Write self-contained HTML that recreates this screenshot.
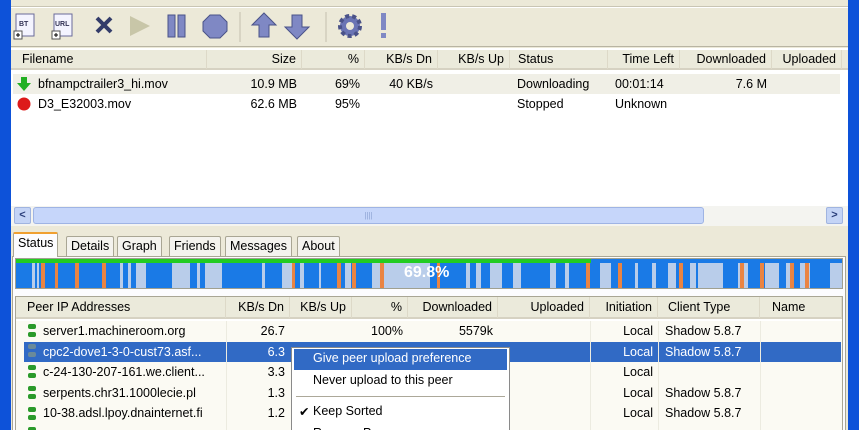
<!DOCTYPE html>
<html style="overflow:hidden;height:430px"><head><meta charset="utf-8"><style>
*{margin:0;padding:0;box-sizing:border-box}
body{width:859px;height:430px;overflow:hidden;background:#ece9d8;font-family:"Liberation Sans",Tahoma,sans-serif;font-size:12px;color:#000;position:relative}
.a{position:absolute;white-space:nowrap}
.hdr{position:absolute;height:20px;background:#ebeadb;border-bottom:2px solid #d6d2c2}
.hc{position:absolute;top:0;height:19px;line-height:19px;border-right:1px solid #ddd9c8;padding:0 5px;font-size:12.5px}
.r{text-align:right}
.cell{position:absolute;height:20px;line-height:20px;padding:0 5px;font-size:12.5px}
.tab{position:absolute;top:236px;height:20px;line-height:18px;border:1px solid #a9a694;border-bottom:none;background:#f4f3ee;padding:0 4px;font-size:12.5px;border-radius:2px 2px 0 0}
</style></head><body>
<div class="a" style="left:0;top:0;width:11px;height:430px;background:#0d52d9"></div>
<div class="a" style="left:848px;top:0;width:11px;height:430px;background:#0d52d9"></div>
<div class="a" style="left:11px;top:6px;width:837px;height:1px;background:#c9c5b4"></div>
<div class="a" style="left:11px;top:7px;width:837px;height:1px;background:#fff"></div>
<svg class="a" style="left:11px;top:8px" width="400" height="38">
<g><rect x="5" y="6" width="18" height="22" fill="#f4f4ff" stroke="#6a6a9a"/><text x="8" y="18" font-size="7" font-weight="bold" fill="#335">BT</text><rect x="3" y="23" width="8" height="8" fill="#fff" stroke="#555"/><path d="M5 27h4M7 25v4" stroke="#000"/></g>
<g><rect x="43" y="6" width="18" height="22" fill="#f4f4ff" stroke="#6a6a9a"/><text x="44" y="18" font-size="7" font-weight="bold" fill="#335">URL</text><rect x="41" y="23" width="8" height="8" fill="#fff" stroke="#555"/><path d="M43 27h4M45 25v4" stroke="#000"/></g>
<path d="M86 10l14 14M100 10l-14 14" stroke="#333c6a" stroke-width="4"/>
<path d="M119 8l20 10l-20 10z" fill="#c8c6a8"/>
<rect x="157" y="7" width="7" height="22" fill="#7f88c4" stroke="#4a5288"/><rect x="167" y="7" width="7" height="22" fill="#7f88c4" stroke="#4a5288"/>
<path d="M199 7h10l7 7v9l-7 7h-10l-7-7v-9z" fill="#7f88c4" stroke="#4a5288"/>
<line x1="229" y1="4" x2="229" y2="34" stroke="#c4c0ae"/>
<path d="M253 5l12 12h-7v12h-10v-12h-7z" fill="#7f88c4" stroke="#4a5288"/>
<path d="M286 31l12-12h-7v-12h-10v12h-7z" fill="#7f88c4" stroke="#4a5288"/>
<line x1="315" y1="4" x2="315" y2="34" stroke="#c4c0ae"/>
<circle cx="339" cy="18" r="10" fill="#6a74b4" stroke="#4a5288" stroke-width="4" stroke-dasharray="4 3"/><circle cx="339" cy="18" r="4" fill="#ece9d8"/>
<rect x="370" y="5" width="5" height="17" fill="#7f88c4"/><rect x="370" y="25" width="5" height="5" fill="#7f88c4"/>
</svg>
<div class="a" style="left:11px;top:46px;width:837px;height:1px;background:#b8b4a2"></div>
<div class="a" style="left:11px;top:48px;width:837px;height:158px;background:#fff"></div>
<div class="hdr" style="left:11px;top:50px;width:837px">
<div class="hc" style="left:0;width:196px;padding-left:11px">Filename</div>
<div class="hc r" style="left:196px;width:95px">Size</div>
<div class="hc r" style="left:291px;width:63px">%</div>
<div class="hc r" style="left:354px;width:73px">KB/s Dn</div>
<div class="hc r" style="left:427px;width:72px">KB/s Up</div>
<div class="hc" style="left:499px;width:98px;padding-left:8px">Status</div>
<div class="hc r" style="left:597px;width:72px">Time Left</div>
<div class="hc r" style="left:669px;width:92px">Downloaded</div>
<div class="hc r" style="left:761px;width:70px">Uploaded</div>
</div>
<div class="a" style="left:13px;top:74px;width:827px;height:20px;background:#f0efe6"></div>
<svg class="a" style="left:17px;top:76px" width="16" height="36"><path d="M4 1h6v6h4l-7 8l-7-8h4z" fill="#22b022"/><circle cx="7" cy="28" r="6.5" fill="#dd1a1a"/></svg>
<div class="cell" style="left:33px;top:74px">bfnampctrailer3_hi.mov</div>
<div class="cell r" style="left:207px;top:74px;width:95px">10.9 MB</div>
<div class="cell r" style="left:302px;top:74px;width:63px">69%</div>
<div class="cell r" style="left:365px;top:74px;width:73px">40 KB/s</div>
<div class="cell" style="left:512px;top:74px">Downloading</div>
<div class="cell" style="left:610px;top:74px">00:01:14</div>
<div class="cell r" style="left:680px;top:74px;width:92px">7.6 M</div>
<div class="cell" style="left:33px;top:94px">D3_E32003.mov</div>
<div class="cell r" style="left:207px;top:94px;width:95px">62.6 MB</div>
<div class="cell r" style="left:302px;top:94px;width:63px">95%</div>
<div class="cell" style="left:512px;top:94px">Stopped</div>
<div class="cell" style="left:610px;top:94px">Unknown</div>
<div class="a" style="left:11px;top:206px;width:837px;height:20px;background:#f4f4f0"></div>
<div class="a" style="left:14px;top:207px;width:17px;height:17px;background:#c4d4f6;border:1px solid #a0b4e0;border-radius:2px;color:#2a3e7a;font-size:11px;line-height:15px;text-align:center;font-weight:bold">&lt;</div>
<div class="a" style="left:33px;top:207px;width:671px;height:17px;background:#c6d6fa;border:1px solid #9fb4e4;border-radius:3px;text-align:center;color:#8fa4d4;font-size:8px;line-height:15px">||||</div>
<div class="a" style="left:826px;top:207px;width:17px;height:17px;background:#c4d4f6;border:1px solid #a0b4e0;border-radius:2px;color:#2a3e7a;font-size:11px;line-height:15px;text-align:center;font-weight:bold">&gt;</div>
<div class="tab" style="left:13px;top:232px;height:25px;background:#fcfcfe;border-top:2px solid #f0a030;z-index:2">Status</div>
<div class="tab" style="left:66px">Details</div>
<div class="tab" style="left:117px">Graph</div>
<div class="tab" style="left:169px">Friends</div>
<div class="tab" style="left:225px">Messages</div>
<div class="tab" style="left:297px">About</div>
<div class="a" style="left:12px;top:256px;width:834px;height:174px;background:#fcfcfe;border:1px solid #a9a694;border-bottom:none"></div>
<div class="a" style="left:15px;top:258px;width:828px;height:31px;background:#1a7ae6;border:1px solid #a0a090;overflow:hidden">
<div class="a" style="left:0;top:0;width:575px;height:4px;background:#22cc22"></div>
<div id="segs"></div>
</div>
<div class="a" style="left:404px;top:264px;color:#fff;font-weight:bold;font-size:16px">69.8%</div>
<div class="a" style="left:15px;top:296px;width:828px;height:134px;background:#fff;border:1px solid #a9a694;border-bottom:none"></div>
<div class="hdr" style="left:16px;top:297px;width:826px;height:22px">
<div class="hc" style="left:0;width:210px;padding-left:11px;height:21px;line-height:21px">Peer IP Addresses</div>
<div class="hc r" style="left:210px;width:64px;height:21px;line-height:21px">KB/s Dn</div>
<div class="hc r" style="left:274px;width:62px;height:21px;line-height:21px">KB/s Up</div>
<div class="hc r" style="left:336px;width:56px;height:21px;line-height:21px">%</div>
<div class="hc r" style="left:392px;width:90px;height:21px;line-height:21px">Downloaded</div>
<div class="hc r" style="left:482px;width:92px;height:21px;line-height:21px">Uploaded</div>
<div class="hc r" style="left:574px;width:68px;height:21px;line-height:21px">Initiation</div>
<div class="hc" style="left:642px;width:102px;height:21px;line-height:21px;padding-left:10px">Client Type</div>
<div class="hc" style="left:744px;width:82px;height:21px;line-height:21px;padding-left:12px">Name</div>
</div>
<div class="a" style="left:16px;top:321px;width:826px;height:109px;background:#fbfaf3"></div>
<div class="a" style="left:24px;top:342px;width:817px;height:20px;background:#316ac5"></div>
<div class="a" style="left:226px;top:321px;width:1px;height:109px;background:#ecebe0"></div>
<div class="a" style="left:590px;top:321px;width:1px;height:109px;background:#ecebe0"></div>
<div class="a" style="left:658px;top:321px;width:1px;height:109px;background:#ecebe0"></div>
<div class="a" style="left:760px;top:321px;width:1px;height:109px;background:#ecebe0"></div>
<svg class="a" style="left:26px;top:322px" width="12" height="108">
<g fill="#2a9a2a"><rect x="2" y="2" width="8" height="5" rx="2"/><rect x="2" y="10" width="8" height="5" rx="2"/>
<rect x="2" y="43" width="8" height="5" rx="2"/><rect x="2" y="51" width="8" height="5" rx="2"/>
<rect x="2" y="64" width="8" height="5" rx="2"/><rect x="2" y="72" width="8" height="5" rx="2"/>
<rect x="2" y="85" width="8" height="5" rx="2"/><rect x="2" y="93" width="8" height="5" rx="2"/>
<rect x="2" y="105" width="8" height="5" rx="2"/></g>
<g fill="#6a8a9a"><rect x="2" y="22" width="8" height="5" rx="2"/><rect x="2" y="30" width="8" height="5" rx="2"/></g>
</svg>
<div class="cell" style="left:38px;top:321px">server1.machineroom.org</div>
<div class="cell r" style="left:226px;top:321px;width:64px">26.7</div>
<div class="cell r" style="left:352px;top:321px;width:56px">100%</div>
<div class="cell r" style="left:408px;top:321px;width:90px">5579k</div>
<div class="cell r" style="left:590px;top:321px;width:68px">Local</div>
<div class="cell" style="left:660px;top:321px">Shadow 5.8.7</div>
<div class="cell" style="left:38px;top:342px;color:#fff">cpc2-dove1-3-0-cust73.asf...</div>
<div class="cell r" style="left:226px;top:342px;width:64px;color:#fff">6.3</div>
<div class="cell r" style="left:590px;top:342px;width:68px;color:#fff">Local</div>
<div class="cell" style="left:660px;top:342px;color:#fff">Shadow 5.8.7</div>
<div class="cell" style="left:38px;top:362px">c-24-130-207-161.we.client...</div>
<div class="cell r" style="left:226px;top:362px;width:64px">3.3</div>
<div class="cell r" style="left:590px;top:362px;width:68px">Local</div>
<div class="cell" style="left:38px;top:383px">serpents.chr31.1000lecie.pl</div>
<div class="cell r" style="left:226px;top:383px;width:64px">1.3</div>
<div class="cell r" style="left:590px;top:383px;width:68px">Local</div>
<div class="cell" style="left:660px;top:383px">Shadow 5.8.7</div>
<div class="cell" style="left:38px;top:403px">10-38.adsl.lpoy.dnainternet.fi</div>
<div class="cell r" style="left:226px;top:403px;width:64px">1.2</div>
<div class="cell r" style="left:590px;top:403px;width:68px">Local</div>
<div class="cell" style="left:660px;top:403px">Shadow 5.8.7</div>
<div class="a" style="left:291px;top:347px;width:219px;height:83px;background:#fff;border:1px solid #8a8a8a;border-bottom:none;overflow:hidden">
<div class="a" style="left:2px;top:1px;width:213px;height:21px;background:#316ac5"></div>
<div class="a" style="left:21px;top:3px;color:#fff;font-size:12.5px">Give peer upload preference</div>
<div class="a" style="left:21px;top:25px;font-size:12.5px">Never upload to this peer</div>
<div class="a" style="left:4px;top:48px;width:209px;height:1px;background:#aca899"></div>
<div class="a" style="left:7px;top:56px;font-size:12.5px">✔</div>
<div class="a" style="left:21px;top:56px;font-size:12.5px">Keep Sorted</div>
<div class="a" style="left:21px;top:78px;font-size:12.5px">Remove Peer</div>
</div>
<script>
var L=[[16,3],[21,2],[104,3],[112,3],[120,10],[156,18],[181,3],[189,17],[246,3],[266,10],[284,4],[303,2],[329,6],[356,28],[384,30],[450,4],[460,5],[474,12],[497,8],[534,6],[549,4],[584,10],[592,3],[619,3],[636,4],[652,8],[674,6],[682,25],[722,10],[749,14],[770,4],[784,10],[814,14]];
var O=[[25,4],[39,3],[59,4],[86,4],[276,3],[321,4],[336,4],[364,4],[421,3],[570,4],[602,4],[663,4],[724,4],[744,4],[774,4],[789,4]];
var s='';L.forEach(function(a){s+='<div style="position:absolute;top:4px;height:27px;left:'+a[0]+'px;width:'+a[1]+'px;background:#b9cdea"></div>'});
O.forEach(function(a){s+='<div style="position:absolute;top:4px;height:27px;left:'+a[0]+'px;width:'+a[1]+'px;background:#ea8442"></div>'});
document.getElementById('segs').innerHTML=s;
</script>
</body></html>
